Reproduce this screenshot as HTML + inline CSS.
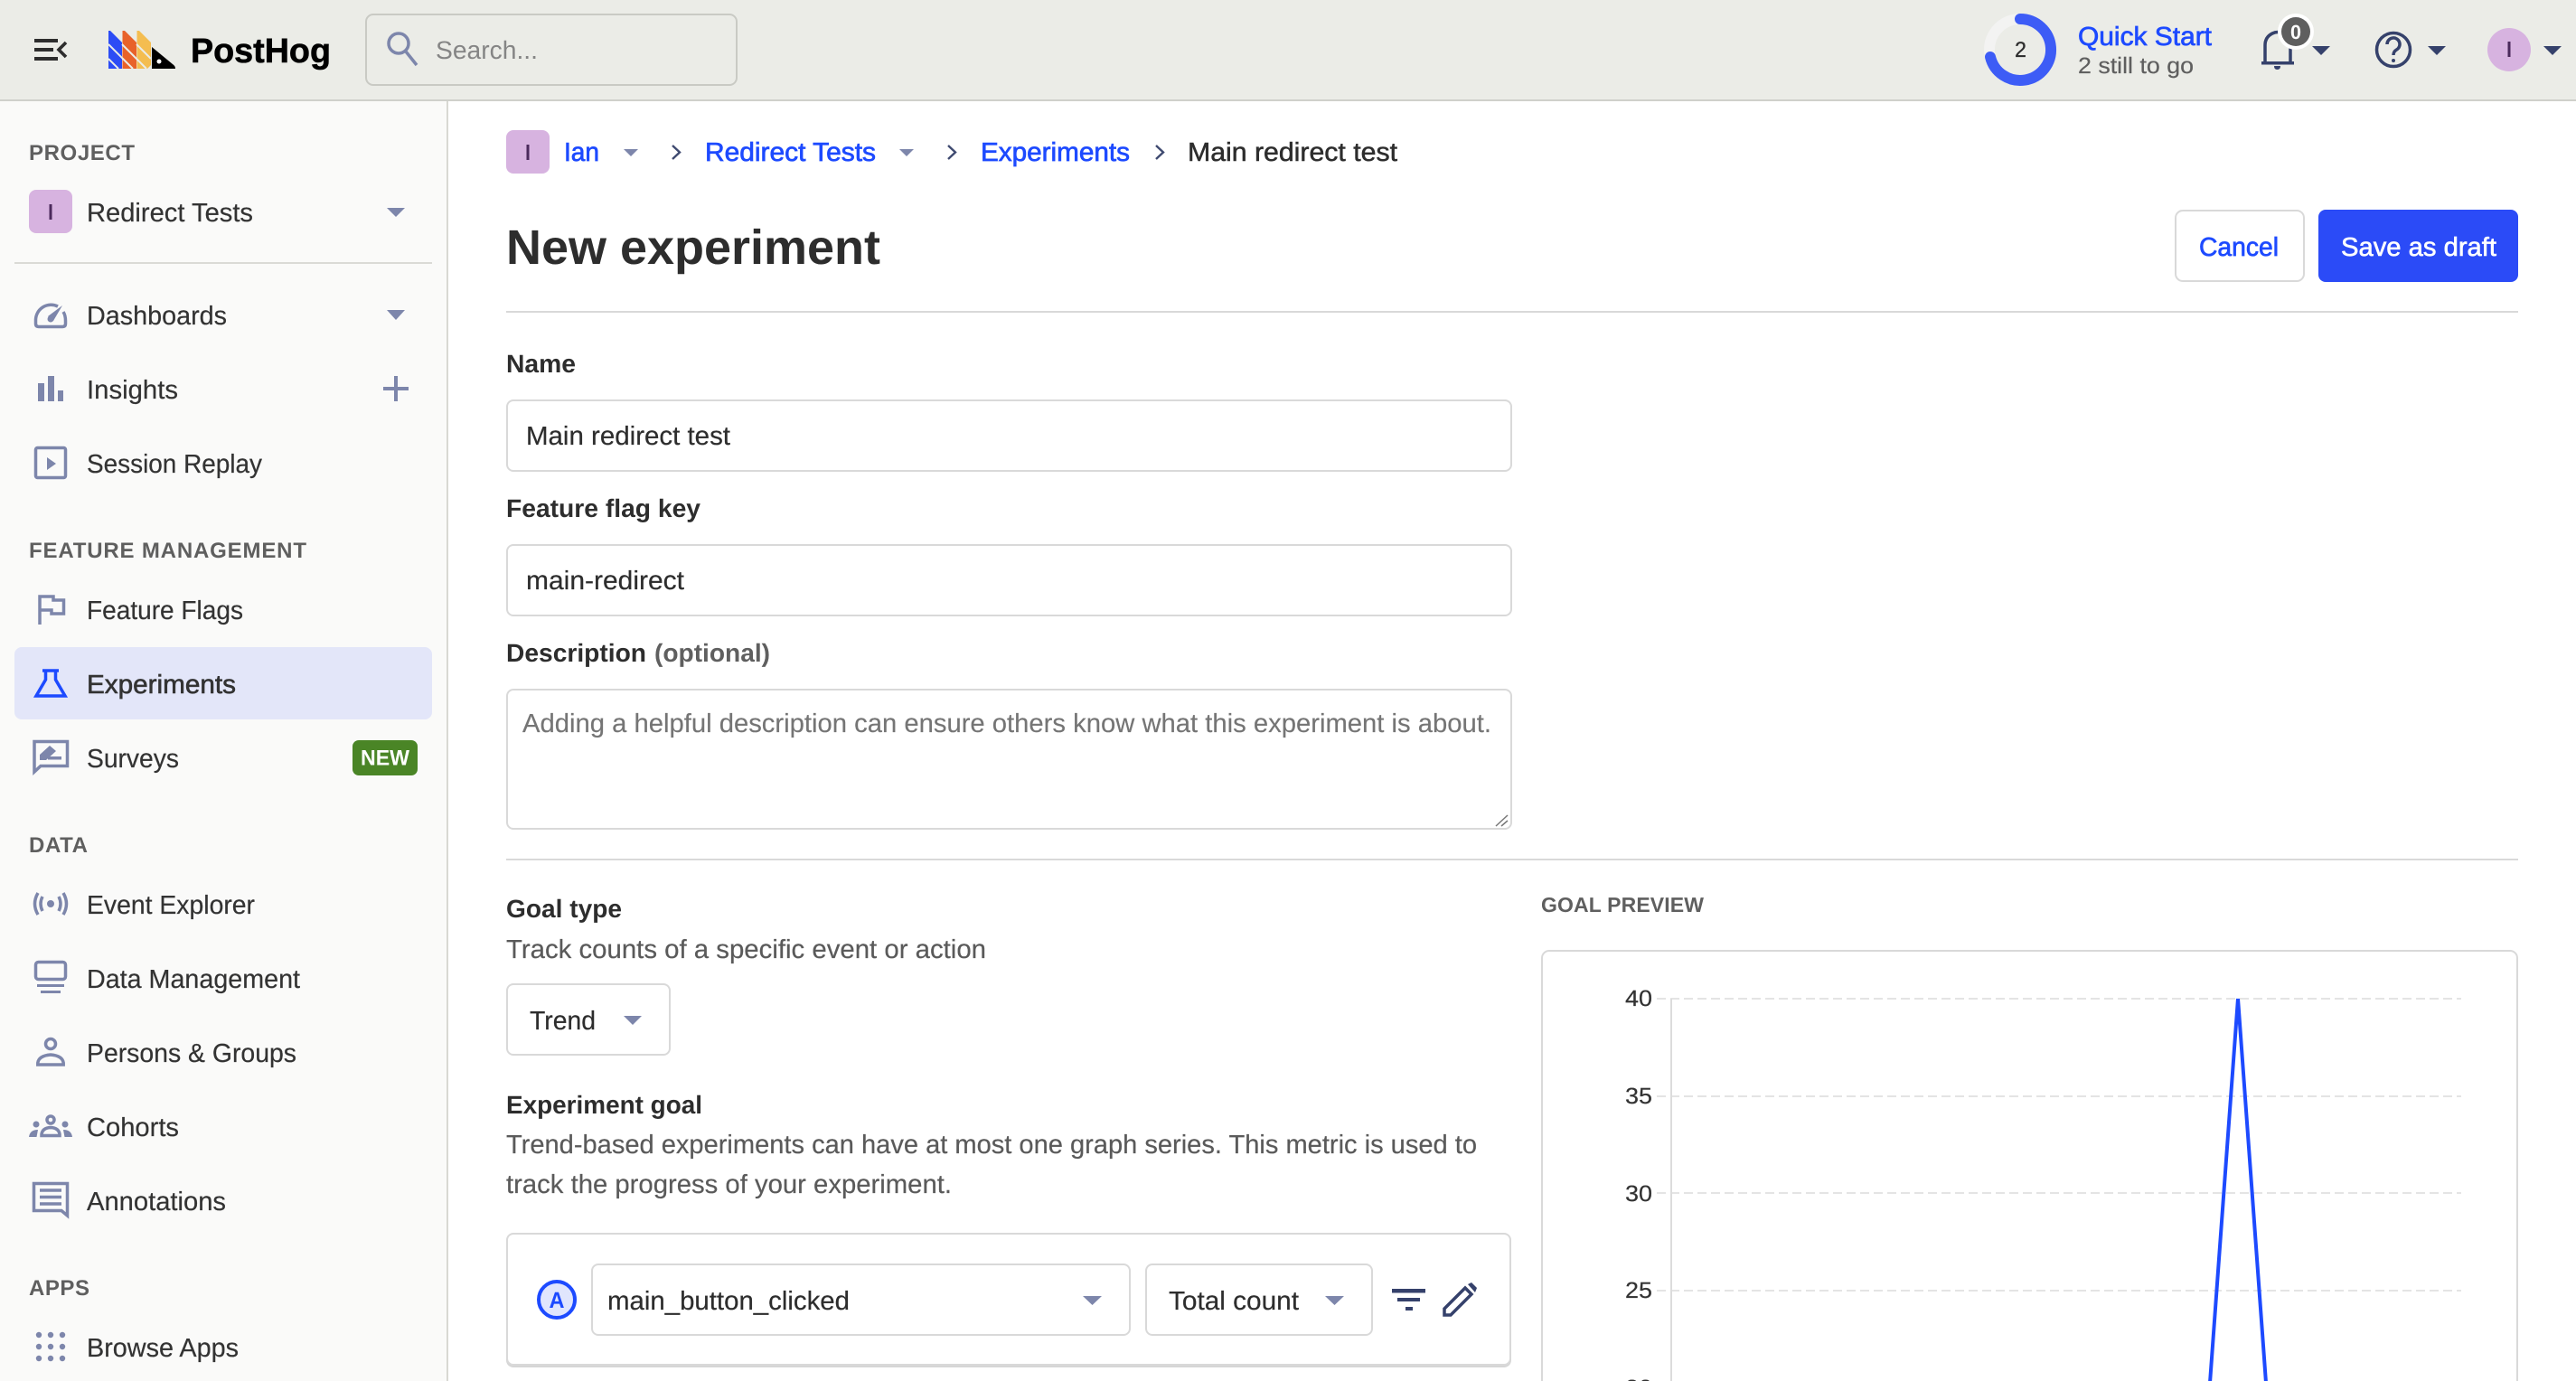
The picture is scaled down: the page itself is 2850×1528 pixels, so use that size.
<!DOCTYPE html>
<html lang="en">
<head>
<meta charset="utf-8">
<title>New experiment - PostHog</title>
<style>
html,body{margin:0;padding:0;width:2850px;height:1528px;overflow:hidden;background:#fff}
svg{display:block;position:absolute;left:0;top:0}
text{font-family:"Liberation Sans",Arial,sans-serif;text-rendering:geometricPrecision}
.t{font-size:29px;fill:#2d2d2d;stroke:#2d2d2d;stroke-width:.2}
.n{font-size:29px;fill:#333;stroke:#333;stroke-width:.2}
.b{font-size:28px;font-weight:700;fill:#2d2d2d}
.g{font-size:24px;font-weight:700;fill:#5f5f5f}
.s{font-size:29px;fill:#5a5a5a;stroke:#5a5a5a;stroke-width:.2}
.l{font-size:29px;fill:#1d4aff;stroke:#1d4aff;stroke-width:.7}
.i{fill:none;stroke:#7d86ab;stroke-width:3.5}
.f{fill:#7d86ab}
.k{fill:none;stroke:#35416b;stroke-width:3.5}
.d{fill:#35416b}
.box{fill:#fff;stroke:#d9d9d9;stroke-width:2}
</style>
</head>
<body>
<svg width="2850" height="1528" viewBox="0 0 2850 1528" xmlns="http://www.w3.org/2000/svg">
<!-- backgrounds -->
<rect width="2850" height="1528" fill="#fff"/>
<rect x="0" y="112" width="494" height="1416" fill="#fafaf9"/>
<rect x="494" y="112" width="2" height="1416" fill="#d8d8d3"/>
<rect width="2850" height="110" fill="#ebece7"/>
<rect y="110" width="2850" height="2" fill="#cfd0cb"/>

<!-- top bar left -->
<g fill="#2d2d2d">
<rect x="38" y="43" width="26" height="4"/><rect x="38" y="53" width="21" height="4"/><rect x="38" y="63" width="26" height="4"/>
</g>
<path d="M73 47L65 55L73 63" fill="none" stroke="#2d2d2d" stroke-width="3.6"/>

<!-- logo -->
<polygon points="120,34 122,34 135,47 135,76 120,76" fill="#2c4cf5"/>
<polygon points="135.5,34 138,34 151,47 151,76 135.500,76" fill="#e8622a"/>
<polygon points="151.500,34 154,34 167,47 167,72 163,76 151.500,76" fill="#f4bd50"/>
<g stroke="#ebece7" stroke-width="2" fill="none">
<path d="M120 49L147 76M120 65L131 76M135 49L162 76M151 49L167 65"/>
</g>
<path d="M168 52L191 71Q194 73 194 76H168Z" fill="#000"/>
<circle cx="176" cy="68" r="2.500" fill="#fff"/>
<text x="211" y="69" font-size="38" font-weight="700" fill="#000" stroke="#000" stroke-width=".6" textLength="155" lengthAdjust="spacingAndGlyphs">PostHog</text>

<!-- search -->
<rect x="405" y="16" width="410" height="78" rx="8" fill="#ebece7" stroke="#c9cac4" stroke-width="2"/>
<circle cx="441" cy="48" r="11" class="i"/>
<path d="M449 57L461 72" class="i" stroke-width="4"/>
<text x="482" y="65" font-size="28" fill="#858585" textLength="113" lengthAdjust="spacingAndGlyphs">Search...</text>

<!-- quick start -->
<circle cx="2235" cy="55" r="34" fill="none" stroke="#f3f3f2" stroke-width="12"/>
<path d="M2235 21A34 34 0 1 1 2202 63" fill="none" stroke="#3d5cf6" stroke-width="12" stroke-linecap="round"/>
<text x="2229" y="63" font-size="24" fill="#2d2d2d" stroke="#2d2d2d" stroke-width=".3" textLength="13" lengthAdjust="spacingAndGlyphs">2</text>
<text x="2299" y="50" class="l" textLength="148" lengthAdjust="spacingAndGlyphs">Quick Start</text>
<text x="2299" y="81" font-size="25" fill="#5f5f5f" stroke="#5f5f5f" stroke-width=".2" textLength="128" lengthAdjust="spacingAndGlyphs">2 still to go</text>

<!-- bell -->
<path d="M2506 70V50Q2506 41 2514 37Q2520 34 2526 37Q2534 41 2534 50V70" class="k"/>
<rect x="2502" y="68" width="36" height="3.500" class="d"/>
<path d="M2516 73h7q0 4 -3.500 4t-3.500 -4z" class="d"/>
<circle cx="2540" cy="35" r="20" fill="#fff"/>
<circle cx="2540" cy="35" r="16" fill="#5f5f5f"/>
<text x="2534" y="43" font-size="22" font-weight="700" fill="#fff" textLength="12" lengthAdjust="spacingAndGlyphs">0</text>
<polygon points="2558,51 2578,51 2568,61" class="d"/>

<!-- help -->
<circle cx="2648" cy="55" r="18.500" class="k"/>
<path d="M2641 49a7 7 0 1 1 10.500 6q-3.500 2 -3.500 6" class="k" stroke-width="3"/>
<circle cx="2648" cy="67" r="2" class="d"/>
<polygon points="2686,51 2706,51 2696,61" class="d"/>

<!-- avatar -->
<circle cx="2776" cy="55" r="24" fill="#d7b3e0"/>
<rect x="2774.500" y="46" width="3" height="17" fill="#4b2a5c"/>
<polygon points="2814,51 2834,51 2824,61" class="d"/>

<!-- sidebar -->
<text x="32" y="177" class="g" textLength="117">PROJECT</text>
<rect x="32" y="210" width="48" height="48" rx="8" fill="#d7b3e0"/>
<rect x="54.500" y="226" width="3" height="17" fill="#4b2a5c"/>
<text x="96" y="245" class="n" textLength="184" lengthAdjust="spacingAndGlyphs">Redirect Tests</text>
<polygon points="428,230 448,230 438,240" class="f"/>
<rect x="16" y="290" width="462" height="2" fill="#dadad6"/>

<!-- dashboards -->
<path d="M64 339A17 17 0 0 0 39.500 355V358Q39.500 361.500 43 361.500H69Q72.500 361.500 72.500 358V355Q72.500 349 70 345" class="i"/>
<path d="M53 350L69 338L59 355Z" class="f"/><circle cx="56" cy="353" r="3.500" class="f"/>
<text x="96" y="359" class="n" textLength="155" lengthAdjust="spacingAndGlyphs">Dashboards</text>
<polygon points="428,343 448,343 438,354" class="f"/>

<!-- insights -->
<rect x="42" y="424" width="7" height="20" class="f"/><rect x="53" y="416" width="7" height="28" class="f"/><rect x="64" y="432" width="6" height="12" class="f"/>
<text x="96" y="441" class="n" textLength="101" lengthAdjust="spacingAndGlyphs">Insights</text>
<rect x="424" y="428" width="28" height="4" class="f"/><rect x="436" y="416" width="4" height="28" class="f"/>

<!-- replay -->
<rect x="39.500" y="495.500" width="33" height="33" rx="2" class="i"/>
<polygon points="52,506 52,520 62,513" class="f"/>
<text x="96" y="523" class="n" textLength="194" lengthAdjust="spacingAndGlyphs">Session Replay</text>

<text x="32" y="617" class="g" textLength="307">FEATURE MANAGEMENT</text>

<!-- flags -->
<path d="M44 691V660H59V664H70.500V679H57V675H44" class="i"/>
<text x="96" y="685" class="n" textLength="173" lengthAdjust="spacingAndGlyphs">Feature Flags</text>

<!-- experiments -->
<rect x="16" y="716" width="462" height="80" rx="8" fill="#e3e6f9"/>
<path d="M47 742H65M50.500 742V752L40 770H72L61.500 752V742" fill="none" stroke="#1d4aff" stroke-width="3.500"/>
<text x="96" y="767" class="n" stroke-width=".5" style="stroke-width:.6" textLength="165" lengthAdjust="spacingAndGlyphs">Experiments</text>

<!-- surveys -->
<path d="M38 854V820.500H74.500V847.500H45Z" class="i"/>
<path d="M44 841V835L55 825L62 831L51 841Z" class="f"/><rect x="53" y="837" width="15" height="3.500" class="f"/>
<text x="96" y="849" class="n" textLength="102" lengthAdjust="spacingAndGlyphs">Surveys</text>
<rect x="390" y="819" width="72" height="39" rx="7" fill="#4a8526"/>
<text x="399" y="846.500" font-size="24" font-weight="700" fill="#fff" textLength="54" lengthAdjust="spacingAndGlyphs">NEW</text>

<text x="32" y="943" class="g" textLength="65">DATA</text>

<!-- event explorer -->
<circle cx="56" cy="1000" r="4" class="f"/>
<path d="M47 992Q43 1000 47 1008M65 992Q69 1000 65 1008M42 988Q35 1000 42 1012M70 988Q77 1000 70 1012" class="i" stroke-width="3.200"/>
<text x="96" y="1011" class="n" textLength="186" lengthAdjust="spacingAndGlyphs">Event Explorer</text>

<!-- data mgmt -->
<rect x="39.500" y="1064.500" width="33" height="19" rx="3" class="i"/>
<rect x="41" y="1089" width="30" height="3" class="f"/><rect x="45" y="1096" width="22" height="3" class="f"/>
<text x="96" y="1093" class="n" textLength="236" lengthAdjust="spacingAndGlyphs">Data Management</text>

<!-- persons -->
<circle cx="56" cy="1155" r="5.500" class="i"/>
<path d="M41.800 1178V1176Q43 1168 56 1167Q69 1168 70.200 1176V1178Z" class="i"/>
<text x="96" y="1175" class="n" textLength="232" lengthAdjust="spacingAndGlyphs">Persons &amp; Groups</text>

<!-- cohorts -->
<circle cx="56" cy="1239" r="4" class="i" stroke-width="3"/>
<path d="M46 1256.500V1255Q47 1248 56 1247.500Q65 1248 66 1255V1256.500Z" class="i" stroke-width="3"/>
<circle cx="40" cy="1244" r="3.500" class="f"/><circle cx="72" cy="1244" r="3.500" class="f"/>
<path d="M32 1258Q33 1250 42 1250L40.500 1258Z" class="f"/><path d="M80 1258Q79 1250 70 1250L71.500 1258Z" class="f"/>
<text x="96" y="1257" class="n" textLength="102" lengthAdjust="spacingAndGlyphs">Cohorts</text>

<!-- annotations -->
<path d="M74.500 1345V1309.500H37.500V1339.500H68Z" class="i"/>
<path d="M44 1317H68M44 1324.500H68M44 1332H68" class="i" stroke-width="2.600"/>
<text x="96" y="1339" class="n" textLength="154" lengthAdjust="spacingAndGlyphs">Annotations</text>

<text x="32" y="1433" class="g" textLength="67">APPS</text>

<!-- browse apps -->
<g class="f">
<circle cx="43" cy="1477" r="3.200"/><circle cx="56" cy="1477" r="3.200"/><circle cx="69" cy="1477" r="3.200"/>
<circle cx="43" cy="1490" r="3.200"/><circle cx="56" cy="1490" r="3.200"/><circle cx="69" cy="1490" r="3.200"/>
<circle cx="43" cy="1503" r="3.200"/><circle cx="56" cy="1503" r="3.200"/><circle cx="69" cy="1503" r="3.200"/>
</g>
<text x="96" y="1501" class="n" textLength="168" lengthAdjust="spacingAndGlyphs">Browse Apps</text>

<!-- breadcrumbs -->
<rect x="560" y="144" width="48" height="48" rx="8" fill="#d7b3e0"/>
<rect x="582.500" y="160" width="3" height="17" fill="#4b2a5c"/>
<text x="624" y="178" class="l" textLength="39" lengthAdjust="spacingAndGlyphs">Ian</text>
<polygon points="690,165 706,165 698,173" class="f"/>
<path d="M744 161L752 168.500L744 176" fill="none" stroke="#3f4a70" stroke-width="2.400"/>
<text x="780" y="178" class="l" textLength="189" lengthAdjust="spacingAndGlyphs">Redirect Tests</text>
<polygon points="995,165 1011,165 1003,173" class="f"/>
<path d="M1049 161L1057 168.500L1049 176" fill="none" stroke="#3f4a70" stroke-width="2.400"/>
<text x="1085" y="178" class="l" textLength="165" lengthAdjust="spacingAndGlyphs">Experiments</text>
<path d="M1279 161L1287 168.500L1279 176" fill="none" stroke="#3f4a70" stroke-width="2.400"/>
<text x="1314" y="178" class="t" style="stroke-width:.5" textLength="232" lengthAdjust="spacingAndGlyphs">Main redirect test</text>

<!-- header -->
<text x="560" y="292" font-size="54" font-weight="700" fill="#2d2d2d" textLength="414" lengthAdjust="spacingAndGlyphs">New experiment</text>
<rect x="2407" y="233" width="142" height="78" rx="8" class="box"/>
<text x="2433" y="283" class="l" textLength="88" lengthAdjust="spacingAndGlyphs">Cancel</text>
<rect x="2565" y="232" width="221" height="80" rx="8" fill="#2b4bf7"/>
<text x="2590" y="283" font-size="29" fill="#fff" stroke="#fff" stroke-width=".6" textLength="172" lengthAdjust="spacingAndGlyphs">Save as draft</text>
<rect x="560" y="344" width="2226" height="2" fill="#d9d9d9"/>

<!-- form -->
<text x="560" y="412" class="b" textLength="77" lengthAdjust="spacingAndGlyphs">Name</text>
<rect x="561" y="443" width="1111" height="78" rx="7" class="box"/>
<text x="582" y="492" class="t" textLength="226" lengthAdjust="spacingAndGlyphs">Main redirect test</text>

<text x="560" y="572" class="b" textLength="215" lengthAdjust="spacingAndGlyphs">Feature flag key</text>
<rect x="561" y="603" width="1111" height="78" rx="7" class="box"/>
<text x="582" y="652" class="t" textLength="175" lengthAdjust="spacingAndGlyphs">main-redirect</text>

<text x="560" y="732" class="b" textLength="155" lengthAdjust="spacingAndGlyphs">Description</text>
<text x="724" y="732" font-size="28" font-weight="700" fill="#5f5f5f" textLength="128" lengthAdjust="spacingAndGlyphs">(optional)</text>
<rect x="561" y="763" width="1111" height="154" rx="7" class="box"/>
<text x="578" y="810" font-size="29" fill="#757575" stroke="#757575" stroke-width=".15" textLength="1072" lengthAdjust="spacingAndGlyphs">Adding a helpful description can ensure others know what this experiment is about.</text>
<path d="M1655 914L1668 902M1661 914L1668 908" stroke="#777" stroke-width="1.500" fill="none"/>
<rect x="560" y="950" width="2226" height="2" fill="#d9d9d9"/>

<text x="560" y="1015" class="b" textLength="128" lengthAdjust="spacingAndGlyphs">Goal type</text>
<text x="560" y="1060" class="s" textLength="531" lengthAdjust="spacingAndGlyphs">Track counts of a specific event or action</text>
<rect x="561" y="1089" width="180" height="78" rx="7" class="box"/>
<text x="586" y="1139" class="t" textLength="73" lengthAdjust="spacingAndGlyphs">Trend</text>
<polygon points="690,1124 710,1124 700,1134" class="f"/>

<text x="560" y="1232" class="b" textLength="217" lengthAdjust="spacingAndGlyphs">Experiment goal</text>
<text x="560" y="1276" class="s" textLength="1074" lengthAdjust="spacingAndGlyphs">Trend-based experiments can have at most one graph series. This metric is used to</text>
<text x="560" y="1320" class="s" textLength="493" lengthAdjust="spacingAndGlyphs">track the progress of your experiment.</text>

<!-- series card -->
<rect x="560" y="1365" width="1112" height="148" rx="8" fill="#d6d6d6"/>
<rect x="561" y="1365" width="1110" height="145" rx="7" class="box"/>
<circle cx="616" cy="1438" r="20" fill="#e0e5fd" stroke="#1d4aff" stroke-width="4"/>
<text x="607.500" y="1447" font-size="25" font-weight="700" fill="#1d4aff" textLength="17" lengthAdjust="spacingAndGlyphs">A</text>
<rect x="655" y="1399" width="595" height="78" rx="7" class="box"/>
<text x="672" y="1449" class="t" textLength="268" lengthAdjust="spacingAndGlyphs">main_button_clicked</text>
<polygon points="1198,1434 1219,1434 1208.500,1444" class="f"/>
<rect x="1268" y="1399" width="250" height="78" rx="7" class="box"/>
<text x="1293" y="1449" class="t" textLength="144" lengthAdjust="spacingAndGlyphs">Total count</text>
<polygon points="1466,1434 1487,1434 1476.500,1444" class="f"/>
<rect x="1540" y="1426" width="37" height="4.500" class="d"/><rect x="1546" y="1436" width="25" height="4" class="d"/><rect x="1555" y="1446" width="8" height="4" class="d"/>
<path d="M1598 1455V1448L1621 1425L1628 1432L1605 1455Z" class="k"/>
<polygon points="1624,1421 1628,1419 1634,1425 1632,1430" class="d"/>

<!-- chart -->
<text x="1705" y="1009" font-size="23" font-weight="700" fill="#5f5f5f" textLength="180">GOAL PREVIEW</text>
<rect x="1706" y="1052" width="1079" height="500" rx="8" class="box"/>
<g stroke="#e4e4e4" stroke-width="2" stroke-dasharray="10 5" fill="none">
<path d="M1833 1105H2723M1833 1213H2723M1833 1320H2723M1833 1428H2723M1833 1535H2723"/>
</g>
<rect x="1848" y="1105" width="2" height="423" fill="#dcdcdc"/>
<g font-size="25" fill="#333" stroke="#333" stroke-width=".2">
<text x="1798" y="1113" textLength="30" lengthAdjust="spacingAndGlyphs">40</text>
<text x="1798" y="1221" textLength="30" lengthAdjust="spacingAndGlyphs">35</text>
<text x="1798" y="1329" textLength="30" lengthAdjust="spacingAndGlyphs">30</text>
<text x="1798" y="1436" textLength="30" lengthAdjust="spacingAndGlyphs">25</text>
<text x="1798" y="1544" textLength="30" lengthAdjust="spacingAndGlyphs">20</text>
</g>
<path d="M2445 1530L2476 1105L2507 1530" fill="none" stroke="#1d4aff" stroke-width="4"/>
</svg>
</body>
</html>
